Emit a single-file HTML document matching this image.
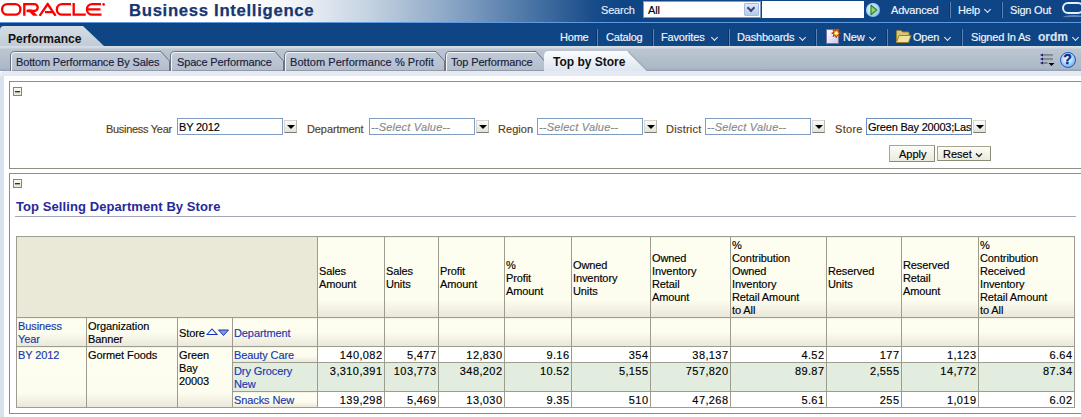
<!DOCTYPE html>
<html><head><meta charset="utf-8">
<style>
*{margin:0;padding:0;box-sizing:border-box}
html,body{width:1081px;height:417px;overflow:hidden;background:#fff;font-family:"Liberation Sans",sans-serif;font-size:11px;color:#000}
.a{position:absolute;white-space:nowrap}
#top{position:absolute;left:0;top:0;width:1081px;height:22px;background:linear-gradient(to right,#fff 0px,#fff 250px,#eef1f6 300px,#c0cfdf 375px,#8aa6c6 450px,#4f78a8 525px,#174b89 595px,#0f4585 625px,#0f4585 1081px)}
#logo{left:2px;top:2px;color:#f80000;font-size:18px;font-weight:bold;letter-spacing:1px}
#bi{left:129px;top:0px;color:#173670;font-size:16px;font-weight:bold;letter-spacing:0.65px;line-height:22px;transform-origin:0 0;transform:scaleX(1.045);-webkit-text-stroke:0.25px #173670}
#nav{position:absolute;left:0;top:22px;width:1081px;height:24px;background:linear-gradient(#0e4283 0,#0f4585 2px,#0f4585 18px,#0c4a82 23px);border-top:1px solid #5e9ae2}
.wt{position:absolute;color:#f2f6fb;font-size:11px;line-height:13px;white-space:nowrap;letter-spacing:-0.2px}
.sep{position:absolute;width:1px;background:#5a82b4;box-shadow:-1px 0 0 #0b3566}
.chev{position:absolute;width:5px;height:5px;border-right:1.5px solid #e8eef6;border-bottom:1.5px solid #e8eef6;transform:rotate(45deg)}
#tabbar{position:absolute;left:0;top:46px;width:1081px;height:25px;background:linear-gradient(#d8dfe6 0,#d0d8e0 2px,#bcc6d2 3px,#abb7c7 23px,#97a3b5 24px,#97a3b5 25px)}
#content{position:absolute;left:0;top:71px;width:1081px;height:346px;background:linear-gradient(#e6ebf3,#e3e9f2 5px,#d8e2ee 6px);border-top-left-radius:4px}
#white{position:absolute;left:4px;top:76px;width:1077px;height:341px;background:#fff}
.panel{position:absolute;border:1px solid #8e8e84;border-right:none}
.coll{position:absolute;width:9px;height:9px;border:1px solid #85857a;background:linear-gradient(#fbfbf5,#e5e5d8)}
.coll:after{content:"";position:absolute;left:1px;top:3px;width:5px;height:1px;background:#333;box-shadow:0 0.5px 0 #666}
.lbl{position:absolute;color:#5a3c10;font-size:11px;line-height:13px;white-space:nowrap;letter-spacing:-0.3px}
.inp{position:absolute;height:17px;border:1px solid #7f9dc0;background:#fff;font-size:11px;line-height:13px;padding:2px 1px 0 1px;white-space:nowrap;overflow:hidden;letter-spacing:-0.2px}
.inp i{color:#8a8a8a;letter-spacing:0.2px}
.dd{position:absolute;width:13px;height:13px;margin-top:-1px;border:1px solid #d6d6ce;border-right-color:#b8b8b0;border-bottom-color:#7a7a72;background:linear-gradient(#fcfcfa,#e2e2da)}
.dd:after{content:"";position:absolute;left:1.5px;top:3.5px;border-left:4px solid transparent;border-right:4px solid transparent;border-top:4.5px solid #000}
.btn{position:absolute;border:1px solid #a9a78f;border-right-color:#8e8c78;border-bottom-color:#8e8c78;background:linear-gradient(#fdfdf8,#e9e9dc);font-size:11px;line-height:13px;white-space:nowrap}
table{position:absolute;border-collapse:collapse;table-layout:fixed}
td{border:1px solid #9c9c90;vertical-align:top;padding:0 0 0 1px;font-size:11px;line-height:13px;overflow:hidden;white-space:nowrap;letter-spacing:-0.1px}
.ch{background:linear-gradient(#fdfdf0 0,#fcfcef 78%,#e9e7da 100%);vertical-align:middle;padding-top:2px}
.rh2{background:linear-gradient(#fdfdf0 0,#fcfcef 50%,#e9e7da 100%);vertical-align:middle;padding-top:2px}
.rh{background:linear-gradient(#fdfdf0 0,#fcfcef 60%,#e9e7da 100%);padding-top:2px}
.dg{background:#e2ede0;padding-top:2px}
td.rh[rowspan]{background:linear-gradient(#fdfdf0 0,#fcfcef 75%,#e9e7da 100%);padding-top:2px}
.blank{background:#eae8d6}
.lnk{color:#1838ac}
.n{text-align:right;padding:2px 1.6px 0 0;background:#fff;letter-spacing:0.4px}
.g td.n{background:#e2ede0}
.tri{display:inline-block;position:relative;width:22px;height:8px;vertical-align:1px}
.subtab{position:absolute;top:51px;height:20px}
.subtab svg{position:absolute;left:0;top:0}
.subtab span{position:absolute;top:4px;color:#1e2a52;font-size:11px;line-height:13px;white-space:nowrap;letter-spacing:-0.3px}
td,.lbl,.inp,.wt,.btn,.tabt{-webkit-text-stroke:0.15px currentColor}
</style></head><body>
<div id="top"></div>
<svg class="a" style="left:0;top:0" width="108" height="20" viewBox="0 0 108 20"><defs><clipPath id="oc"><rect x="0" y="2.6" width="108" height="13.3"/></clipPath></defs><g fill="none" stroke="#ff0000" stroke-width="2.35" clip-path="url(#oc)"><rect x="2.1" y="4.15" width="18.3" height="10.5" rx="5.25"/><path d="M24.3 15.8 V4.15 H34.3 A3.4 3.4 0 0 1 34.3 10.95 H26.5"/><path d="M39.6 15.8 L47.7 4.0 L55.6 15.8" stroke-linejoin="miter"/><path d="M45 12.05 H53.5"/><path d="M71 4.15 H62.1 A5.25 5.25 0 0 0 62.1 14.65 H71"/><path d="M73.7 3 V14.65 H85.8"/><path d="M101 4.15 H92.2 A5.25 5.25 0 0 0 92.2 14.65 H101.5 M88 9.35 H100.5"/></g><path d="M27 9.6 H31.5 L37.8 15.8 H33.2 Z" fill="#ff0000"/><circle cx="103.6" cy="4.4" r="1.3" fill="#ff0000"/></svg>
<div class="a" id="bi">Business Intelligence</div>
<div class="wt" style="left:601px;top:4px;color:#e6eef8">Search</div>
<div class="inp" style="left:643px;top:1px;width:118px;height:17px;border-color:#7a9cc8;padding-left:4px">All</div>
<div class="a" style="left:744px;top:3px;width:15px;height:13px;background:linear-gradient(#dfe9fa,#b5c9ec);border:1px solid #a6bde3;border-radius:1px"><div style="position:absolute;left:3px;top:1px;width:6px;height:6px;border-right:2px solid #374a78;border-bottom:2px solid #374a78;transform:rotate(45deg)"></div></div>
<div class="a" style="left:762px;top:1px;width:102px;height:17px;background:#fff"></div>
<div class="a" style="left:865.5px;top:2.5px;width:14px;height:14px;border-radius:50%;background:radial-gradient(circle at 40% 40%,#e4f2ff 0,#a6d2f6 55%,#5c9ee0 90%,#2a64b4 100%);box-shadow:0 0 0 0.5px #1a4f9c"><svg style="position:absolute;left:0;top:0" width="14" height="14" viewBox="0 0 14 14"><path d="M5 2.3 L10.8 7 L5 11.7 Z" fill="#8fd46a" stroke="#2f8a1e" stroke-width="1.2" stroke-linejoin="round"/></svg></div>
<div class="wt" style="left:891px;top:4px">Advanced</div>
<div class="sep" style="left:950px;top:2px;height:16px"></div>
<div class="wt" style="left:958px;top:4px">Help</div>
<div class="chev" style="left:985px;top:7px"></div>
<div class="sep" style="left:1002px;top:2px;height:16px"></div>
<div class="wt" style="left:1010px;top:4px">Sign Out</div>
<div class="a" style="left:1061.5px;top:1.5px;width:22px;height:12.5px;border:2.5px solid #e4eefa;border-radius:6.5px"></div>
<div class="a" style="left:1063px;top:15px;width:22px;height:5px;border-top:2px solid rgba(190,210,240,0.45);border-radius:50% 50% 0 0"></div>
<div id="nav"></div>
<div class="wt" style="left:560px;top:31px">Home</div>
<div class="sep" style="left:597px;top:29px;height:17px"></div>
<div class="wt" style="left:606px;top:31px">Catalog</div>
<div class="sep" style="left:653px;top:29px;height:17px"></div>
<div class="wt" style="left:661px;top:31px">Favorites</div>
<div class="chev" style="left:712px;top:35px"></div>
<div class="sep" style="left:729px;top:29px;height:17px"></div>
<div class="wt" style="left:737px;top:31px">Dashboards</div>
<div class="chev" style="left:800px;top:35px"></div>
<div class="sep" style="left:816px;top:29px;height:17px"></div>
<svg class="a" style="left:825px;top:28px" width="17" height="17" viewBox="0 0 17 17"><defs><linearGradient id="ng" x1="0" y1="0" x2="1" y2="1"><stop offset="0" stop-color="#ffffff"/><stop offset="1" stop-color="#cfc6ec"/></linearGradient></defs><path d="M1.5 1.5 H13.5 V15.5 H1.5 Z" fill="url(#ng)" stroke="#7a70a8" stroke-width="1"/><path d="M11.30 0.60 L12.18 3.08 L14.55 1.95 L13.42 4.32 L15.90 5.20 L13.42 6.08 L14.55 8.45 L12.18 7.32 L11.30 9.80 L10.42 7.32 L8.05 8.45 L9.18 6.08 L6.70 5.20 L9.18 4.32 L8.05 1.95 L10.42 3.08 Z" fill="#f6d21e" stroke="#b42400" stroke-width="0.9" stroke-linejoin="round"/><circle cx="11.3" cy="5.2" r="1.4" fill="#fff6b0"/></svg>
<div class="wt" style="left:843px;top:31px">New</div>
<div class="chev" style="left:870px;top:35px"></div>
<div class="sep" style="left:887px;top:29px;height:17px"></div>
<svg class="a" style="left:895px;top:29px" width="17" height="15" viewBox="0 0 17 15"><path d="M1.5 13.5 V2.5 Q1.5 1.5 2.5 1.5 H6 L7.5 3 H13 Q14 3 14 4 V6" fill="#d8c678" stroke="#9a8430" stroke-width="1"/><path d="M1.5 13.5 L4 6.5 H16 L13.5 13.5 Z" fill="#efe29c" stroke="#9a8430" stroke-width="1" stroke-linejoin="round"/></svg>
<div class="wt" style="left:913px;top:31px">Open</div>
<div class="chev" style="left:945px;top:35px"></div>
<div class="sep" style="left:962px;top:29px;height:17px"></div>
<div class="wt" style="left:971px;top:31px">Signed In As</div>
<div class="wt" style="left:1038px;top:31px;font-weight:bold;font-size:12px;color:#d6e4f4;letter-spacing:0">ordm</div>
<div class="chev" style="left:1073px;top:35px"></div>

<div id="tabbar"></div>
<!-- Performance tab -->
<svg class="a" style="left:0;top:25px" width="106" height="22" viewBox="0 0 106 22"><defs><linearGradient id="pg" x1="0" y1="0" x2="0" y2="1"><stop offset="0" stop-color="#d4dde4"/><stop offset="1" stop-color="#c1ccd7"/></linearGradient></defs><path d="M0 21 V5 Q0 1 4 1 H83 L104 21 Z" fill="url(#pg)"/></svg>
<div class="a" style="left:8px;top:32px;font-weight:bold;font-size:12px;line-height:14px;color:#111">Performance</div>
<svg class="a" style="left:0;top:46px" width="700" height="26" viewBox="0 46 700 26"><defs><linearGradient id="tg" x1="0" y1="0" x2="0" y2="1"><stop offset="0" stop-color="#c2cbd8"/><stop offset="1" stop-color="#b3bdcc"/></linearGradient><linearGradient id="sg" x1="0" y1="0" x2="0" y2="1"><stop offset="0" stop-color="#fafcfe"/><stop offset="1" stop-color="#dde5f0"/></linearGradient></defs><path d="M10.5 71 V56 Q10.5 51.5 14.5 51.5 H161 L169.5 61 V71 Z" fill="url(#tg)" stroke="#6b7484" stroke-width="1"/><path d="M11.5 71 V56 Q11.5 52.5 14.5 52.5 H160.5" fill="none" stroke="#f4f7fa" stroke-width="1"/><path d="M170.5 71 V56 Q170.5 51.5 174.5 51.5 H275 L283.5 61 V71 Z" fill="url(#tg)" stroke="#6b7484" stroke-width="1"/><path d="M171.5 71 V56 Q171.5 52.5 174.5 52.5 H274.5" fill="none" stroke="#f4f7fa" stroke-width="1"/><path d="M284.5 71 V56 Q284.5 51.5 288.5 51.5 H436 L444.5 61 V71 Z" fill="url(#tg)" stroke="#6b7484" stroke-width="1"/><path d="M285.5 71 V56 Q285.5 52.5 288.5 52.5 H435.5" fill="none" stroke="#f4f7fa" stroke-width="1"/><path d="M445.5 71 V56 Q445.5 51.5 449.5 51.5 H536 L544.5 61 V71 Z" fill="url(#tg)" stroke="#6b7484" stroke-width="1"/><path d="M446.5 71 V56 Q446.5 52.5 449.5 52.5 H535.5" fill="none" stroke="#f4f7fa" stroke-width="1"/><path d="M627.5 51 H627.5 L647 71 H544 V56 Q544 51 549 51 Z" fill="url(#sg)"/><path d="M628 51.5 L647 70.5" stroke="#8e9aaa" stroke-width="1.2" opacity="0.6"/></svg><div class="a tabt" style="left:16px;top:56px;color:#18203c;font-size:11px;line-height:13px;letter-spacing:-0.15px">Bottom Performance By Sales</div><div class="a tabt" style="left:177px;top:56px;color:#18203c;font-size:11px;line-height:13px;letter-spacing:-0.15px">Space Performance</div><div class="a tabt" style="left:290px;top:56px;color:#18203c;font-size:11px;line-height:13px;letter-spacing:0.05px">Bottom Performance % Profit</div><div class="a tabt" style="left:451px;top:56px;color:#18203c;font-size:11px;line-height:13px;letter-spacing:-0.15px">Top Performance</div><div class="a" style="left:553px;top:55px;font-weight:bold;font-size:12px;line-height:14px;color:#111">Top by Store</div>
<div class="a" style="left:1040px;top:53px;width:16px;height:14px">
<svg width="16" height="14" viewBox="0 0 16 14"><g fill="#1a1a70"><path d="M0 2 L3 0.5 V3.5 Z"/><path d="M0 6 L3 4.5 V7.5 Z"/><path d="M0 10 L3 8.5 V11.5 Z"/></g><path d="M3 2 H13 M3 6 H13 M3 10 H7.5" stroke="#4a4a4a" stroke-width="1.1"/><path d="M3 2.9 H13 M3 6.9 H13" stroke="#9aa0a8" stroke-width="0.8"/><path d="M8.5 10 H14.5 L11.5 13 Z" fill="#000"/></svg></div>
<div class="a" style="left:1059.5px;top:51.5px;width:16px;height:16px;border-radius:50%;background:radial-gradient(circle at 45% 40%,#f4faff 0,#c4e2fb 40%,#6aa8ea 80%,#3a7ad0 100%);border:1.5px solid #1d5cc2;color:#08308e;font-weight:bold;font-size:14px;line-height:13px;text-align:center;-webkit-text-stroke:0.4px #08308e">?</div>

<div id="content"></div>
<div id="white"></div>

<!-- prompts panel -->
<div class="panel" style="left:9px;top:81px;width:1072px;height:88px"></div>
<div class="coll" style="left:13px;top:87px"></div>
<div class="lbl" style="left:106px;top:123px">Business Year</div>
<div class="inp" style="left:177px;top:118px;width:106px;padding-left:1px">BY 2012</div>
<div class="dd" style="left:284px;top:121px"></div>
<div class="lbl" style="left:307px;top:123px;letter-spacing:-0.1px">Department</div>
<div class="inp" style="left:369px;top:118px;width:106px"><i>--Select Value--</i></div>
<div class="dd" style="left:476px;top:121px"></div>
<div class="lbl" style="left:498px;top:123px;letter-spacing:0.05px">Region</div>
<div class="inp" style="left:537px;top:118px;width:106px"><i>--Select Value--</i></div>
<div class="dd" style="left:644px;top:121px"></div>
<div class="lbl" style="left:666px;top:123px;letter-spacing:0.25px">District</div>
<div class="inp" style="left:705px;top:118px;width:106px"><i>--Select Value--</i></div>
<div class="dd" style="left:812px;top:121px"></div>
<div class="lbl" style="left:835px;top:123px;letter-spacing:0.3px">Store</div>
<div class="inp" style="left:866px;top:118px;width:106px;border-color:#6f90bc">Green Bay 20003;Last</div>
<div class="dd" style="left:973px;top:121px"></div>
<div class="btn" style="left:889px;top:145px;width:46px;height:17px;padding:2px 0 0 9px">Apply</div>
<div class="btn" style="left:937px;top:146px;width:54px;height:15px;padding:1px 0 0 5px">Reset</div>
<svg class="a" style="left:974px;top:151px" width="10" height="8" viewBox="0 0 10 8"><path d="M2 2.5 L5 5.5 L8 2.5" fill="none" stroke="#222" stroke-width="1.3"/></svg>

<!-- report panel -->
<div class="panel" style="left:9px;top:173px;width:1072px;height:241px"></div>
<div class="coll" style="left:13px;top:179px"></div>
<div class="a" style="left:16px;top:199px;color:#26299a;font-weight:bold;font-size:13px;line-height:15px;letter-spacing:0.08px">Top Selling Department By Store</div>
<div class="a" style="left:15px;top:216px;width:1061px;height:1px;background:#a3a7b8"></div>
<table id="tbl" style="left:16px;top:236px;width:1059px"><col style="width:70px"><col style="width:91px"><col style="width:55px"><col style="width:85px"><col style="width:67px"><col style="width:54px"><col style="width:66px"><col style="width:67px"><col style="width:79px"><col style="width:80px"><col style="width:96px"><col style="width:75px"><col style="width:77px"><col style="width:96px"><tr style="height:81px"><td class="blank" colspan="4"></td><td class="ch">Sales<br>Amount</td><td class="ch">Sales<br>Units</td><td class="ch">Profit<br>Amount</td><td class="ch">%<br>Profit<br>Amount</td><td class="ch">Owned<br>Inventory<br>Units</td><td class="ch">Owned<br>Inventory<br>Retail<br>Amount</td><td class="ch">%<br>Contribution<br>Owned<br>Inventory<br>Retail Amount<br>to All</td><td class="ch">Reserved<br>Units</td><td class="ch">Reserved<br>Retail<br>Amount</td><td class="ch">%<br>Contribution<br>Received<br>Inventory<br>Retail Amount<br>to All</td></tr><tr style="height:29px"><td class="rh2 lnk">Business<br>Year</td><td class="rh2">Organization<br>Banner</td><td class="rh2 mid">Store<svg width="24" height="9" viewBox="0 0 24 9" style="vertical-align:0px;margin-left:1px"><path d="M1 6.5 L6 1 L11 6.5 Z" fill="none" stroke="#1434c0" stroke-width="1.05"/><path d="M12.5 2 H22.5 L17.5 7.5 Z" fill="#8a9ac4" stroke="#1434c0" stroke-width="1"/></svg></td><td class="rh2 lnk mid">Department</td><td class="rh2"></td><td class="rh2"></td><td class="rh2"></td><td class="rh2"></td><td class="rh2"></td><td class="rh2"></td><td class="rh2"></td><td class="rh2"></td><td class="rh2"></td><td class="rh2"></td></tr><tr style="height:16px"><td class="rh lnk" rowspan="3">BY 2012</td><td class="rh" rowspan="3">Gormet Foods</td><td class="rh" rowspan="3">Green<br>Bay<br>20003</td><td class="rh lnk">Beauty Care</td><td class="n">140,082</td><td class="n">5,477</td><td class="n">12,830</td><td class="n">9.16</td><td class="n">354</td><td class="n">38,137</td><td class="n">4.52</td><td class="n">177</td><td class="n">1,123</td><td class="n">6.64</td></tr><tr class="g" style="height:29px"><td class="dg lnk">Dry Grocery<br>New</td><td class="n">3,310,391</td><td class="n">103,773</td><td class="n">348,202</td><td class="n">10.52</td><td class="n">5,155</td><td class="n">757,820</td><td class="n">89.87</td><td class="n">2,555</td><td class="n">14,772</td><td class="n">87.34</td></tr><tr style="height:16px"><td class="rh lnk">Snacks New</td><td class="n">139,298</td><td class="n">5,469</td><td class="n">13,030</td><td class="n">9.35</td><td class="n">510</td><td class="n">47,268</td><td class="n">5.61</td><td class="n">255</td><td class="n">1,019</td><td class="n">6.02</td></tr></table>
</body></html>
